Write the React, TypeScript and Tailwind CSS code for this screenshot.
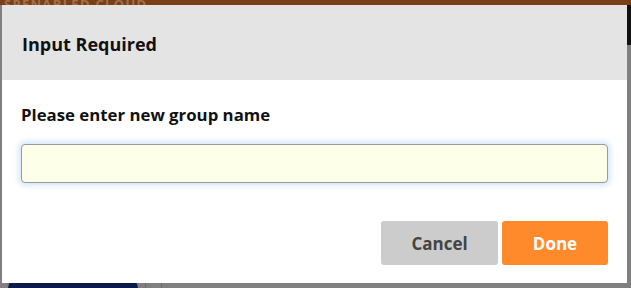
export default function App() {
  return (
    <div className="relative h-[288px] w-[631px] overflow-hidden bg-[#808080] font-['Open_Sans',sans-serif]">
      {/* page behind the overlay */}
      <div className="flex h-[5px] items-end bg-[#7b3f18] pl-1 text-[13px] font-bold leading-none tracking-widest text-[#a0704c]">
        <span className="-mb-[6px]">SPENABLED CLOUD</span>
      </div>
      <div className="absolute right-0 top-[5px] h-[40px] w-[4px] bg-[#111]" />
      <div className="absolute bottom-0 left-[8px] h-[10px] w-[130px] rounded-t-full bg-[#0c1a4a]" />
      <div className="absolute bottom-0 left-[145px] h-[5px] w-[1px] bg-[#6a6a6a]" />
      <div className="absolute bottom-0 left-[161px] h-[5px] w-[1px] bg-[#6a6a6a]" />

      {/* modal */}
      <div className="absolute left-[2px] top-[5px] flex h-[278px] w-[625px] flex-col bg-white">
        <div className="flex h-[75px] items-center bg-[#e4e4e4] px-5 pt-[3px]">
          <h2 className="text-[18px] font-bold text-[#111]">Input Required</h2>
        </div>
        <div className="px-[19px] pt-[22px]">
          <label className="block text-[16.8px] font-bold text-[#111]">Please enter new group name</label>
          <input
            type="text"
            className="mt-[17px] h-[39px] w-[587px] rounded-[4px] border border-[#9a9a9a] bg-[#fdffe9] px-2 shadow-[0_0_6px_2px_rgba(150,190,240,0.45)] outline-none"
          />
        </div>
        <div className="mt-auto flex justify-end gap-[4px] pb-[18px] pr-[19px]">
          <button className="h-[44px] w-[117px] rounded-[3px] bg-[#cccccc] pt-[2px] text-[17px] font-bold text-[#444]">Cancel</button>
          <button className="h-[44px] w-[106px] rounded-[3px] bg-[#ff8a2b] pt-[2px] text-[17px] font-bold text-white">Done</button>
        </div>
      </div>
    </div>
  );
}
